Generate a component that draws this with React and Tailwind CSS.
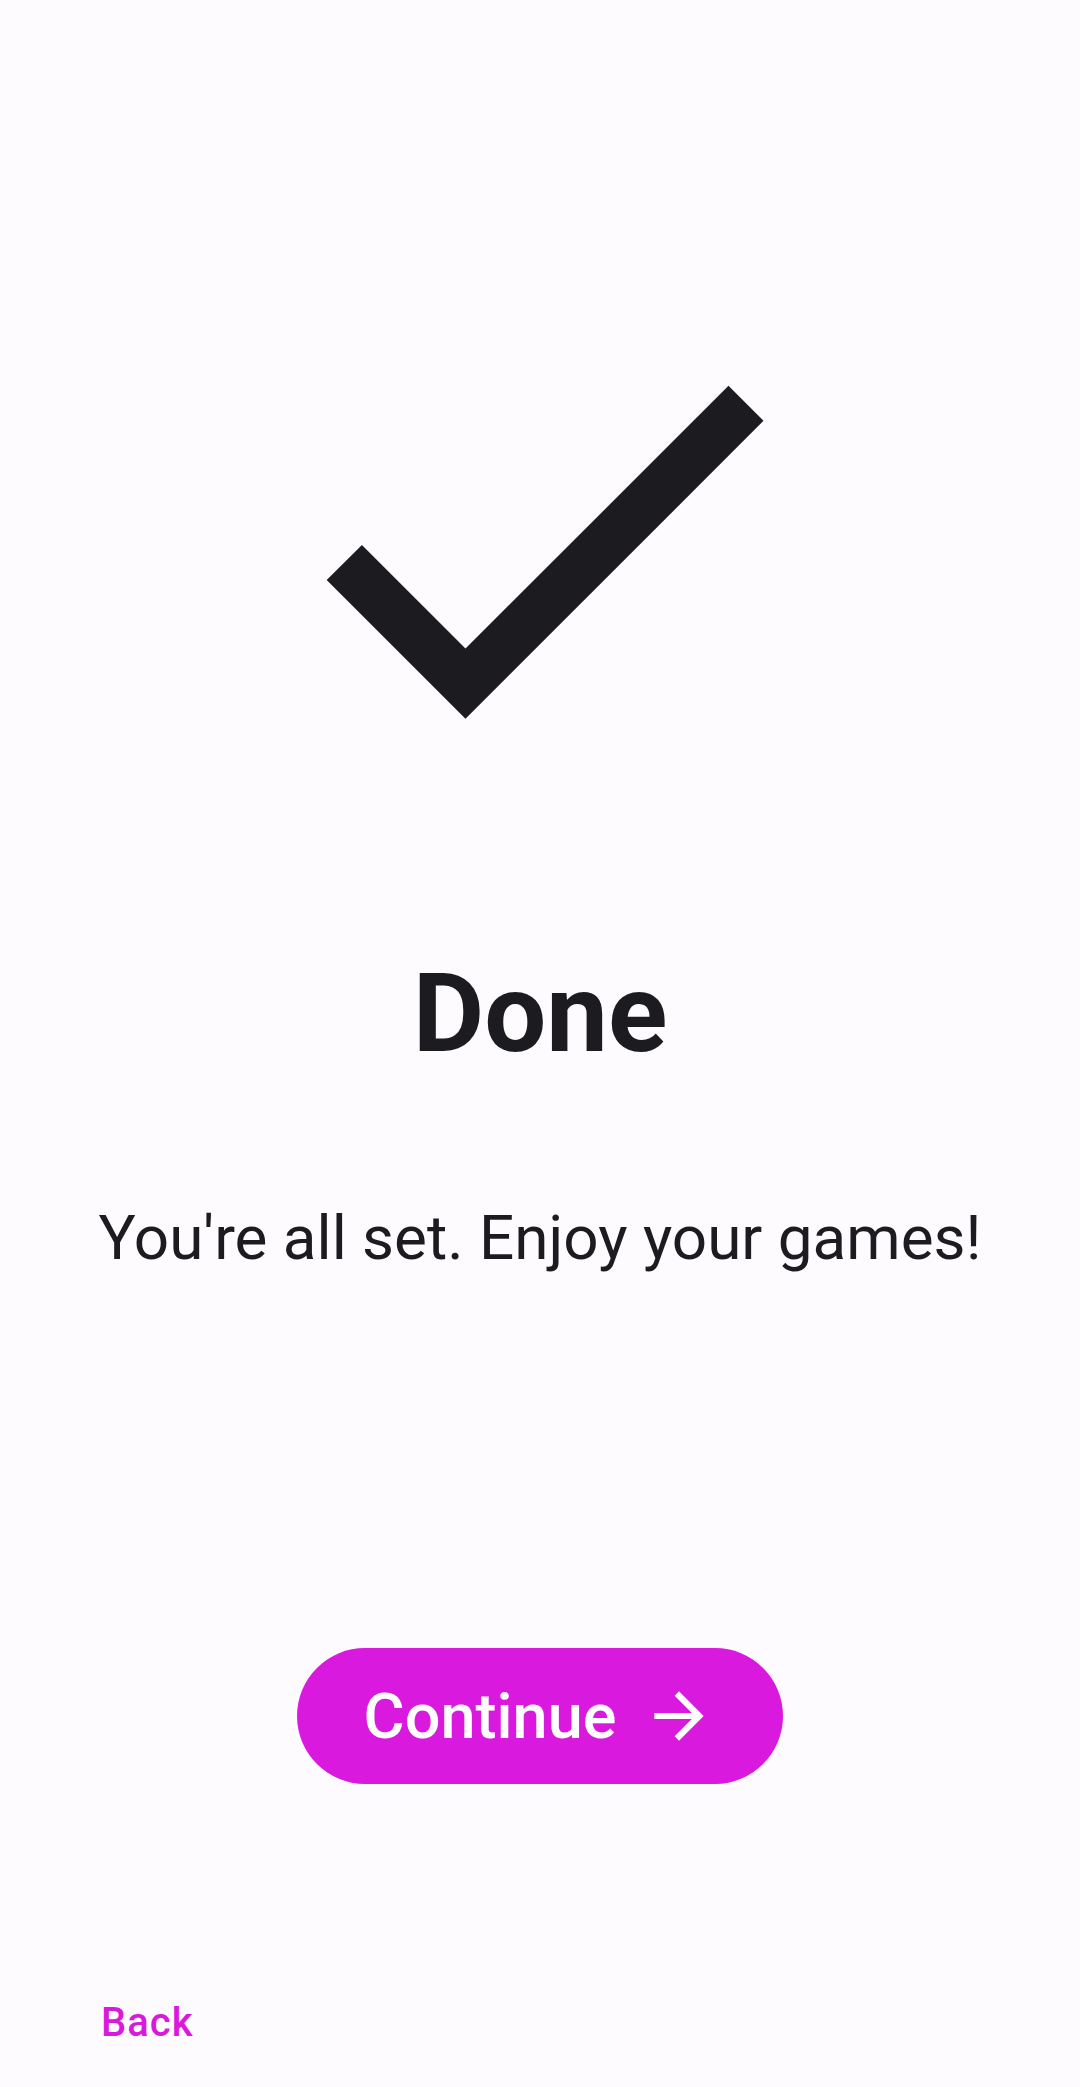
import React from "react";

function CheckIcon({ className }) {
    return (
        <svg viewBox="0 0 24 24" className={className} fill="currentColor">
            <path d="M9 16.17L4.83 12l-1.42 1.41L9 19 21 7l-1.41-1.41z" />
        </svg>
    );
}

function ArrowIcon({ className }) {
    return (
        <svg viewBox="0 0 24 24" className={className} fill="currentColor">
            <path d="M12 4l-1.41 1.41L16.17 11H4v2h12.17l-5.58 5.59L12 20l8-8z" />
        </svg>
    );
}

export default function App() {
    return (
        <div
            className="min-h-[2087px] w-full bg-[#fefbff] flex flex-col items-center text-[#1c1b1f]"
            style={{ fontFamily: "Roboto, 'Noto Sans', sans-serif" }}
        >
            {/* Check mark */}
            <CheckIcon className="mt-[247px] w-[596px] h-[596px] text-[#1c1b1f]" />

            {/* Title */}
            <h1 className="mt-[116px] text-[110px] leading-none font-bold">Done</h1>

            {/* Subtitle */}
            <p className="mt-[138px] text-[62px] leading-none font-normal">
                You're all set. Enjoy your games!
            </p>

            {/* Continue */}
            <button className="mt-[379px] w-[486px] h-[136px] rounded-full bg-[#d91ade] text-white flex items-center justify-center">
                <span className="text-[63px] leading-none font-medium">Continue</span>
                <ArrowIcon className="ml-[26px] w-[74px] h-[74px]" />
            </button>

            {/* Back */}
            <button className="self-start ml-[101px] mt-[219px] text-[40px] leading-none font-medium tracking-[1px] text-[#d91ade]">
                Back
            </button>
        </div>
    );
}
